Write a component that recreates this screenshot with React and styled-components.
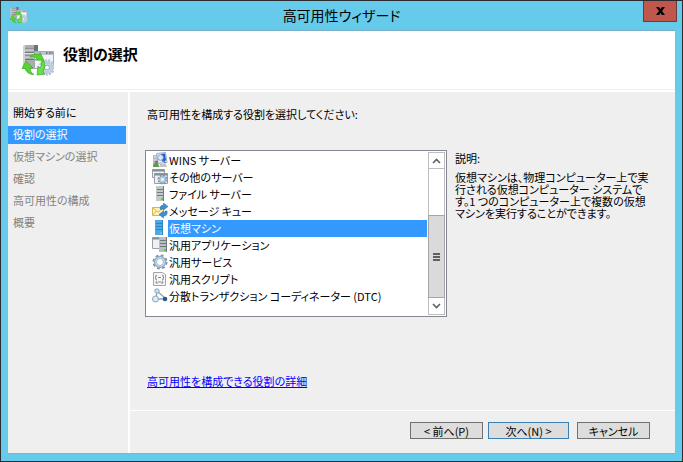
import React, { useState } from 'react';
import styled, { createGlobalStyle } from 'styled-components';

const GlobalStyle = createGlobalStyle`
  * {
    box-sizing: border-box;
  }
  body {
    margin: 0;
    font-family: 'Noto Sans CJK JP', sans-serif;
    font-size: 11px;
    line-height: 16px;
    font-feature-settings: 'palt';
    color: #000;
  }
  button {
    font: inherit;
    font-feature-settings: inherit;
    color: inherit;
    padding: 0;
  }
  ul, ol, h1, h2, p {
    margin: 0;
    padding: 0;
    list-style: none;
  }
`;

const Window = styled.div`
  display: flex;
  flex-direction: column;
  min-height: 100vh;
  padding: 0 7px 7px;
  border: 1px solid #2b2b30;
  background: #66caea;
`;

const TitleBar = styled.header`
  display: grid;
  grid-template-columns: 1fr auto 1fr;
  height: 30px;
  border-bottom: 1px solid #76afc6;
  h1 {
    font-size: 14px;
    font-weight: 400;
    line-height: 29px;
  }
`;

const AppIcon = styled.span`
  padding: 6px 0 0 2px;
`;

const CloseButton = styled.button`
  justify-self: end;
  display: flex;
  align-items: center;
  justify-content: center;
  width: 34px;
  height: 21px;
  margin-right: -2px;
  border: 1px solid #6b3a3a;
  border-top: 0;
  background: #c1564d;
`;

const Client = styled.div`
  flex: 1;
  display: flex;
  flex-direction: column;
  background: #efefef;
  border-bottom: 1px solid #7fb4c9;
`;

const PageHeader = styled.div`
  display: flex;
  gap: 9px;
  height: 61px;
  padding: 14px;
  background: linear-gradient(#efefef, #efefef) 0 58px / 100% 1px no-repeat #fff;
  h2 {
    font-size: 15px;
    font-weight: 700;
    line-height: 17px;
  }
`;

const Columns = styled.div`
  flex: 1;
  display: flex;
`;

const Steps = styled.ol`
  flex: none;
  display: flex;
  flex-direction: column;
  gap: 4px;
  width: 122px;
  padding: 12px 2px 0 0;
  border-right: 2px solid #fff;
`;

const Step = styled.li`
  height: 18px;
  padding-left: 5px;
  line-height: 17px;
  color: ${({ $state }) =>
    $state === 'current' ? '#fff' : $state === 'done' ? '#000' : '#838383'};
  background: ${({ $state }) =>
    $state === 'current' ? '#3399ff' : 'transparent'};
`;

const Main = styled.main`
  flex: 1;
  min-width: 0;
  display: flex;
  flex-direction: column;
`;

const Body = styled.div`
  flex: 1;
  display: flex;
  flex-direction: column;
  align-items: flex-start;
  padding: 14px 15px 20px;
`;

const Prompt = styled.p`
  padding-left: 2px;
`;

const Picker = styled.div`
  display: flex;
  gap: 8px;
  width: 100%;
  margin: 28px 0 56px;
`;

const ListBox = styled.div`
  flex: none;
  display: flex;
  width: 302px;
  height: 167px;
  padding: 1px;
  border: 1px solid #828790;
  background: #fff;
`;

const RoleList = styled.ul`
  flex: 1;
  padding: 0 1px 0 5px;
  overflow: hidden;
`;

const Role = styled.li`
  display: flex;
  height: 17px;
  cursor: default;
  svg {
    flex: none;
  }
  span {
    flex: 1;
    padding-left: 1px;
    color: ${({ $selected }) => ($selected ? '#fff' : '#000')};
    background: ${({ $selected }) => ($selected ? '#3399ff' : 'transparent')};
    white-space: nowrap;
  }
`;

const ScrollBar = styled.div`
  display: flex;
  flex-direction: column;
  width: 17px;
  border: 1px solid #bdbdbd;
`;

const ScrollButton = styled.button`
  display: flex;
  align-items: center;
  justify-content: center;
  height: 16px;
  border: 0;
  border-bottom: ${({ $up }) => ($up ? '1px solid #bdbdbd' : '0')};
  background: #fff;
`;

const Thumb = styled.div`
  flex: 1;
  display: flex;
  align-items: center;
  justify-content: center;
  margin: 46px -1px 0;
  border: 1px solid #a6a6a6;
  background: #dadada;
`;

const Description = styled.section`
  flex: 1;
  white-space: nowrap;
  p {
    margin-top: 5px;
    line-height: 12px;
  }
`;

const HelpLink = styled.a`
  margin-left: 2px;
  color: #0000ff;
`;

const Footer = styled.footer`
  display: flex;
  justify-content: flex-end;
  height: 43px;
  padding: 11px 25px 0 0;
  border-top: 1px solid #fff;
`;

const WizardButton = styled.button`
  width: ${({ $primary }) => ($primary ? 81 : 73)}px;
  height: 17px;
  margin-left: ${({ $gap }) => $gap || 0}px;
  border: 1px solid ${({ $primary }) => ($primary ? '#3c7fb1' : '#707070')};
  background: #dddddd;
  line-height: 14px;
  white-space: nowrap;
`;

const HaIcon = ({ size }) => (
  <svg width={size} height={size} viewBox="0 0 32 32">
    <path d="M1 1l3-1h12v24H1z" fill="#a9adb1" />
    <path d="M1 1h2v23H1z" fill="#cfd3d6" />
    <path d="M12 0h4v24h-4z" fill="#6c7277" />
    <path d="M3 4h9M3 7.500h9M3 11h9M3 14.500h9" stroke="#70767b" />
    <path d="M3 5h9M3 8.500h9M3 12h9" stroke="#e3e6e8" />
    <path d="M12.500 6.500h19v17h-19z" fill="#f1f5fb" stroke="#a3a9b3" />
    <path d="M13 7h18v3H13z" fill="#bac2cc" />
    <path d="M24 8h1.500M27 8h1.500M29.500 8h1" stroke="#58687c" strokeWidth="1.500" />
    <circle cx="25" cy="22.500" r="7" fill="#dbe6f2" stroke="#b2c2d4" strokeWidth="2.500" strokeDasharray="2 1.400" />
    <circle cx="25" cy="22.500" r="5" fill="none" stroke="#bccddf" strokeWidth="3" />
    <circle cx="25" cy="22.500" r="2.500" fill="#f5f9fc" stroke="#8ca2ba" />
    <path d="M8 12q5-5 9-2l1-2.500 4 8-9-.500 2-2q-3-2-7-1z" fill="#54d62f" stroke="#35ad1b" strokeWidth=".7" />
    <path d="M4 16l7 7H8q0 5 4 6.500-7 0-9-6H0z" fill="#54d62f" stroke="#35ad1b" strokeWidth=".7" />
    <path d="M22 16q2 6-1 11l2 2-8 1 1-9 2 2q3-2 1-6z" fill="#6edc4c" stroke="#35ad1b" strokeWidth=".7" />
  </svg>
);

const Gear = ({ cx, cy, r }) => (
  <g fill="none">
    <circle cx={cx} cy={cy} r={r} stroke="#7795b0" strokeWidth="2" strokeDasharray={`${r * 0.42} ${r * 0.365}`} />
    <circle cx={cx} cy={cy} r={r * 0.7} stroke="#8faac2" strokeWidth={r * 0.5} />
    <circle cx={cx} cy={cy} r={r * 0.65} stroke="#c3d5e5" strokeWidth={r * 0.25} />
  </g>
);

const Tower = ({ x, light, dark, led }) => (
  <g>
    <path d={`M${x} 0h8v15h-8z`} fill={light} />
    <path d={`M${x + 7} 0h1v15h-1z`} fill={dark} />
    <path d={`M${x + 1} 3.5h6M${x + 1} 6.5h6M${x + 1} 9.5h6`} stroke={dark} />
    <path d={`M${x + 5} 12h2v2h-2z`} fill={led} />
  </g>
);

const Pane = ({ x, y, w, h }) => (
  <g>
    <path d={`M${x} ${y}h${w}v${h}h-${w}z`} fill="#eef0f2" stroke="#99a0a7" />
    <path d={`M${x} ${y}h${w}v2h-${w}z`} fill="#858f99" />
  </g>
);

const icons = {
  wins: (
    <>
      <path d="M1 3h5v11H1z" fill="#b3bbc1" />
      <path d="M2 5h3M2 8h3" stroke="#e3e8eb" />
      <path d="M4.500 1.500l9-1 1.500 10-9 1z" fill="#e7edf6" stroke="#a3adc2" />
      <path d="M9 2l4-.500 1 7-4 1z" fill="#2457c9" />
      <circle cx="8.500" cy="5.500" r="2.800" fill="#d5ebff" stroke="#7fa0cf" />
      <path d="M10.500 8l3 3" stroke="#5575ba" strokeWidth="1.500" />
      <path d="M1 15q0-4 3-4t3 4z" fill="#579d56" />
      <path d="M8 12h6l1 3H7z" fill="#c2c5c8" />
      <circle cx="4.500" cy="10" r="1.500" fill="#86705e" />
    </>
  ),
  other: (
    <>
      <Pane x={0.5} y={0.5} w={12} h={8} />
      <Pane x={2.5} y={4.5} w={13} h={10} />
      <Gear cx={10.5} cy={10.5} r={4} />
    </>
  ),
  file: <Tower x={4} light="#c3c8cb" dark="#707a80" led="#4ed52d" />,
  queue: (
    <>
      <path d="M.5 4.500h11v8H.5z" fill="#fff0b5" stroke="#deb04f" />
      <path d="M1 5l5 4 5-4M1 12l3-4" fill="none" stroke="#deb866" />
      <path d="M8 6q0-4 3.500-4V0L16 3.500 11.500 7V5Q10 5 10 7z" fill="#3b91d2" stroke="#236ba5" strokeWidth=".5" />
      <path d="M15 8q1 5-3.500 5v2L7 11.500 11.500 8v2q2 0 1.500-2z" fill="#3b91d2" stroke="#236ba5" strokeWidth=".5" />
    </>
  ),
  vm: <Tower x={3} light="#4ba9e3" dark="#2d86c3" led="#6bbcf0" />,
  app: (
    <>
      <Pane x={0.5} y={0.5} w={11} h={11} />
      <Tower x={7} light="#b9c0c4" dark="#6d777d" led="#4ed52d" />
    </>
  ),
  service: <Gear cx={8} cy={8} r={6.5} />,
  script: (
    <>
      <path d="M1.500 1.500h9l3 2v11h-12z" fill="#f6f6f7" stroke="#a0a5aa" />
      <path d="M5 4q-2 0-1 2l-1 .5 1 .5q-1 2 1 2M10 4q2 0 1 2l1 .5-1 .5q1 2-1 2M6 6.500h3M5 10q-1 0-1 2h2M10 10q1 0 1 2H9M6 11h3" fill="none" stroke="#6a7177" strokeWidth=".8" />
    </>
  ),
  dtc: (
    <>
      <path d="M5 3L4 11M5 3l8 7M4 11l9 0" fill="none" stroke="#8ca6bd" strokeWidth="1.400" />
      <circle cx="5" cy="3" r="2.200" fill="#cde0ef" stroke="#86a4bd" />
      <circle cx="3.500" cy="11" r="3" fill="#deecf6" stroke="#86a4bd" />
      <circle cx="13" cy="11" r="2.300" fill="#285987" />
    </>
  ),
};

const Icon = ({ name }) => (
  <svg width="16" height="16" viewBox="0 0 16 16">
    {icons[name]}
  </svg>
);

const steps = [
  { label: '開始する前に', state: 'done' },
  { label: '役割の選択', state: 'current' },
  { label: '仮想マシンの選択' },
  { label: '確認' },
  { label: '高可用性の構成' },
  { label: '概要' },
];

const roles = [
  { id: 'wins', label: 'WINS サーバー' },
  { id: 'other', label: 'その他のサーバー' },
  { id: 'file', label: 'ファイル サーバー' },
  { id: 'queue', label: 'メッセージ キュー' },
  { id: 'vm', label: '仮想マシン' },
  { id: 'app', label: '汎用アプリケーション' },
  { id: 'service', label: '汎用サービス' },
  { id: 'script', label: '汎用スクリプト' },
  { id: 'dtc', label: '分散トランザクション コーディネーター (DTC)' },
];

function App() {
  const [selected, setSelected] = useState('vm');

  return (
    <>
      <GlobalStyle />
      <Window>
        <TitleBar>
          <AppIcon>
            <HaIcon size={17} />
          </AppIcon>
          <h1>高可用性ウィザード</h1>
          <CloseButton aria-label="閉じる">
            <svg width="9" height="8" viewBox="0 0 9 8">
              <path d="M0 0h3l1.500 2L6 0h3L6 4l3 4H6L4.500 6 3 8H0l3-4z" />
            </svg>
          </CloseButton>
        </TitleBar>
        <Client>
          <PageHeader>
            <HaIcon size={32} />
            <h2>役割の選択</h2>
          </PageHeader>
          <Columns>
            <Steps>
              {steps.map(({ label, state }) => (
                <Step key={label} $state={state}>
                  {label}
                </Step>
              ))}
            </Steps>
            <Main>
              <Body>
                <Prompt id="prompt">高可用性を構成する役割を選択してください:</Prompt>
                <Picker>
                  <ListBox>
                    <RoleList role="listbox" aria-labelledby="prompt" tabIndex={0}>
                      {roles.map(({ id, label }) => (
                        <Role
                          key={id}
                          role="option"
                          aria-selected={id === selected}
                          $selected={id === selected}
                          onClick={() => setSelected(id)}
                        >
                          <Icon name={id} />
                          <span>{label}</span>
                        </Role>
                      ))}
                    </RoleList>
                    <ScrollBar>
                      <ScrollButton $up aria-label="上へ">
                        <svg width="9" height="6" viewBox="0 0 9 6">
                          <path d="M1 5l3.500-3.500L8 5" fill="none" stroke="#606060" strokeWidth="1.600" />
                        </svg>
                      </ScrollButton>
                      <Thumb>
                        <svg width="7" height="8" viewBox="0 0 7 8">
                          <path d="M0 1h7M0 4h7M0 7h7" stroke="#606060" strokeWidth="2" />
                        </svg>
                      </Thumb>
                      <ScrollButton aria-label="下へ">
                        <svg width="9" height="6" viewBox="0 0 9 6">
                          <path d="M1 1l3.500 3.500L8 1" fill="none" stroke="#606060" strokeWidth="1.600" />
                        </svg>
                      </ScrollButton>
                    </ScrollBar>
                  </ListBox>
                  <Description>
                    <div>説明:</div>
                    <p>
                      仮想マシンは、物理コンピューター上で実
                      <br />
                      行される仮想コンピューター システムで
                      <br />
                      す。1 つのコンピューター上で複数の仮想
                      <br />
                      マシンを実行することができます。
                    </p>
                  </Description>
                </Picker>
                <HelpLink href="#roles">高可用性を構成できる役割の詳細</HelpLink>
              </Body>
              <Footer>
                <WizardButton>&lt; 前へ(P)</WizardButton>
                <WizardButton $primary $gap={5}>
                  次へ(N) &gt;
                </WizardButton>
                <WizardButton $gap={8}>キャンセル</WizardButton>
              </Footer>
            </Main>
          </Columns>
        </Client>
      </Window>
    </>
  );
}

export default App;
